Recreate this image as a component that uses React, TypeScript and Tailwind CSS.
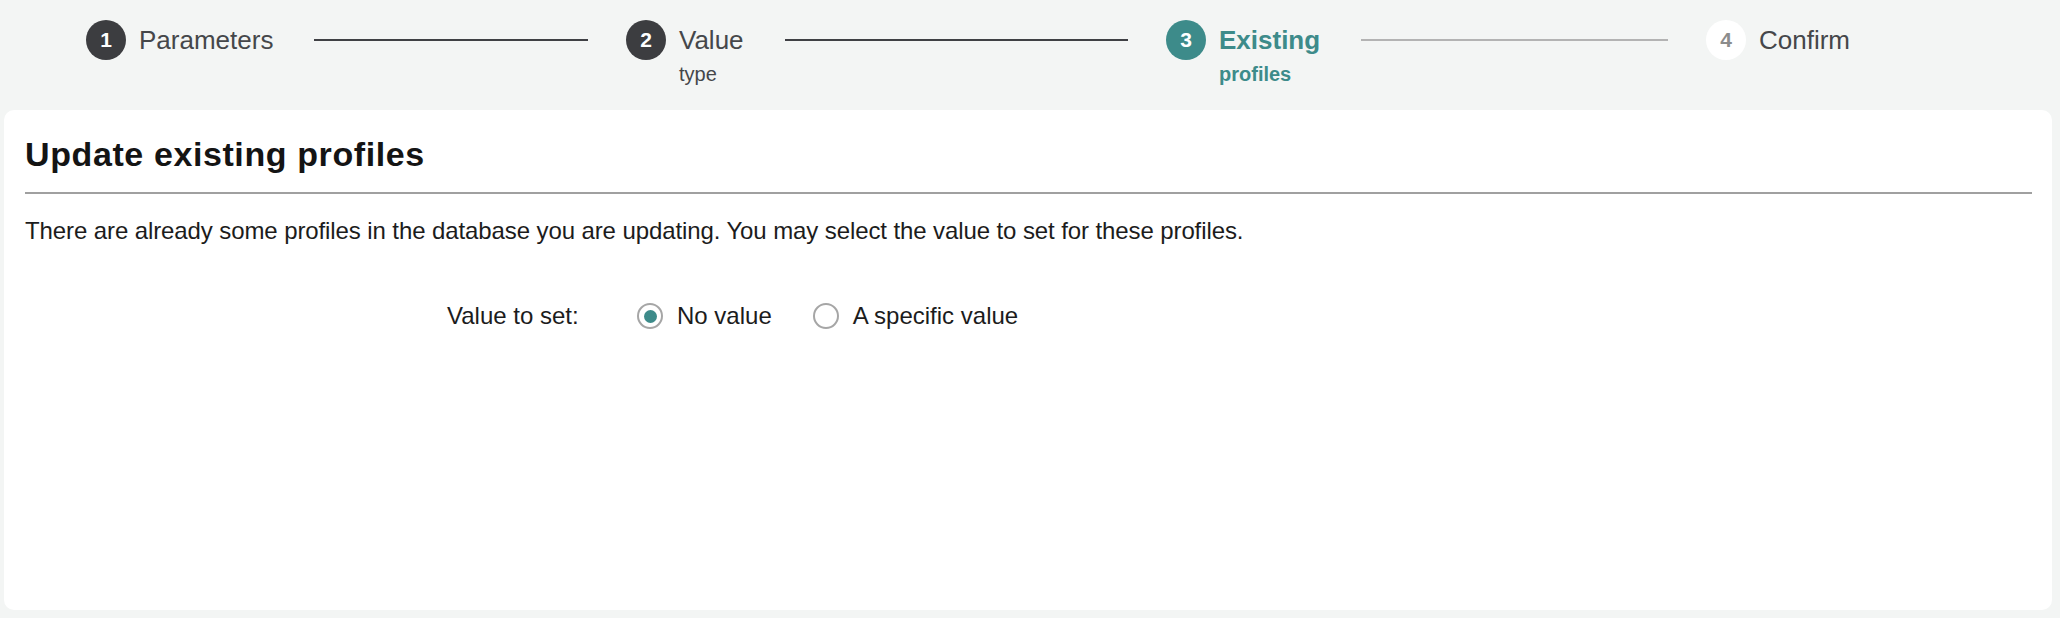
import React, { useState } from 'react';

interface Step {
  n: number;
  label: string;
  sub?: string;
  state: 'done' | 'active' | 'todo';
}

const steps: Step[] = [
  { n: 1, label: 'Parameters', state: 'done' },
  { n: 2, label: 'Value', sub: 'type', state: 'done' },
  { n: 3, label: 'Existing', sub: 'profiles', state: 'active' },
  { n: 4, label: 'Confirm', state: 'todo' },
];

const StepItem: React.FC<{ step: Step; last: boolean }> = ({ step, last }) => {
  const circleClass =
    step.state === 'done'
      ? 'bg-[#3c3d40] text-white'
      : step.state === 'active'
        ? 'bg-[#3d8b8a] text-white'
        : 'bg-white text-[#8c8c8c]';
  const labelClass =
    step.state === 'active' ? 'text-[#3d8b8a] font-bold' : 'text-[#45474a]';
  const lineClass = step.state === 'done' ? 'bg-[#3f4044]' : 'bg-[#b3b3b3]';

  return (
    <div className={last ? 'flex items-start shrink-0' : 'flex items-start w-[540px] shrink-0'}>
      <div
        className={`h-10 w-10 rounded-full flex items-center justify-center text-[21px] font-bold shrink-0 ${circleClass}`}
      >
        {step.n}
      </div>
      <div className={`ml-[13px] ${labelClass}`}>
        <div className="text-[26px] leading-[40px]">{step.label}</div>
        {step.sub && <div className="text-[20px] leading-[28px]">{step.sub}</div>}
      </div>
      {!last && <div className={`flex-1 h-[2px] mt-[19px] ml-[41px] mr-[38px] ${lineClass}`} />}
    </div>
  );
};

const Radio: React.FC<{ checked: boolean; label: string; onClick: () => void }> = ({
  checked,
  label,
  onClick,
}) => (
  <button type="button" onClick={onClick} className="flex items-center gap-[14px] cursor-pointer">
    <span className="h-[26px] w-[26px] rounded-full border-2 border-[#a6a6a6] bg-white flex items-center justify-center">
      {checked && <span className="h-[13px] w-[13px] rounded-full bg-[#3d8b8a]" />}
    </span>
    <span className="text-[24px] leading-8 text-[#1c1c1c]">{label}</span>
  </button>
);

const App: React.FC = () => {
  const [value, setValue] = useState<'none' | 'specific'>('none');

  return (
    <div
      className="min-h-[618px] bg-[#f3f5f4] pt-5 pl-1 pr-2 pb-2"
      style={{ fontFamily: '"Liberation Sans", Arial, sans-serif' }}
    >
      <div className="h-[90px] pl-[82px] flex items-start">
        {steps.map((step, i) => (
          <StepItem key={step.n} step={step} last={i === steps.length - 1} />
        ))}
      </div>

      <div className="h-[500px] bg-white rounded-[10px] pt-6 pl-[21px] pr-5">
        <h1 className="text-[34px] leading-10 font-bold text-[#141414] tracking-[0.6px]">
          Update existing profiles
        </h1>
        <div className="mt-[18px] h-[2px] bg-[#a0a0a0]" />
        <p className="mt-[21px] text-[24px] leading-8 text-[#1c1c1c] tracking-[-0.1px]">
          There are already some profiles in the database you are updating. You may select the
          value to set for these profiles.
        </p>

        <div className="mt-[53px] ml-[422px] flex items-center">
          <div className="w-[190px] text-[24px] leading-8 text-[#1c1c1c]">Value to set:</div>
          <div className="flex items-center gap-[41px]">
            <Radio checked={value === 'none'} label="No value" onClick={() => setValue('none')} />
            <Radio
              checked={value === 'specific'}
              label="A specific value"
              onClick={() => setValue('specific')}
            />
          </div>
        </div>
      </div>
    </div>
  );
};

export default App;
